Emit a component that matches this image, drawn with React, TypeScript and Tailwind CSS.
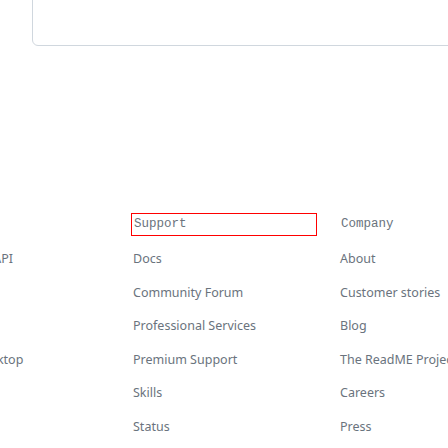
const columns = [
  {
    title: 'Platform',
    links: ['Developer API', 'Partners', 'Electron', 'GitHub Desktop'],
    width: 'w-[203px]',
  },
  {
    title: 'Support',
    links: ['Docs', 'Community Forum', 'Professional Services', 'Premium Support', 'Skills', 'Status'],
    focused: true,
    width: 'w-[207px]',
  },
  {
    title: 'Company',
    links: ['About', 'Customer stories', 'Blog', 'The ReadME Project', 'Careers', 'Press'],
    width: 'w-[207px]',
  },
];

export default function App() {
  return (
    <div className="w-[448px] h-[448px] overflow-hidden bg-white text-[#6a737d]">
      <div className="ml-[32px] mt-[-20px] h-[66px] w-[460px] rounded-md border border-[#d0d7de] bg-white" />

      <footer className="mt-[167px] ml-[-72px] flex">
        {columns.map(col => (
          <div key={col.title} className={`${col.width} shrink-0 flex flex-col`}>
            <h3
              className={`w-[186px] h-[23px] flex items-center pl-[2px] font-['Liberation_Mono',monospace] text-[12.5px] font-normal ${
                col.focused ? 'border border-[#ff0000]' : 'border border-transparent'
              }`}
            >
              {col.title}
            </h3>
            <ul className="mt-[7px] flex flex-col">
              {col.links.map(link => (
                <li
                  key={link}
                  className="h-[33.5px] pl-[2px] flex items-center whitespace-nowrap font-['Noto_Sans',sans-serif] text-[12.5px]"
                >
                  {link}
                </li>
              ))}
            </ul>
          </div>
        ))}
      </footer>
    </div>
  );
}
